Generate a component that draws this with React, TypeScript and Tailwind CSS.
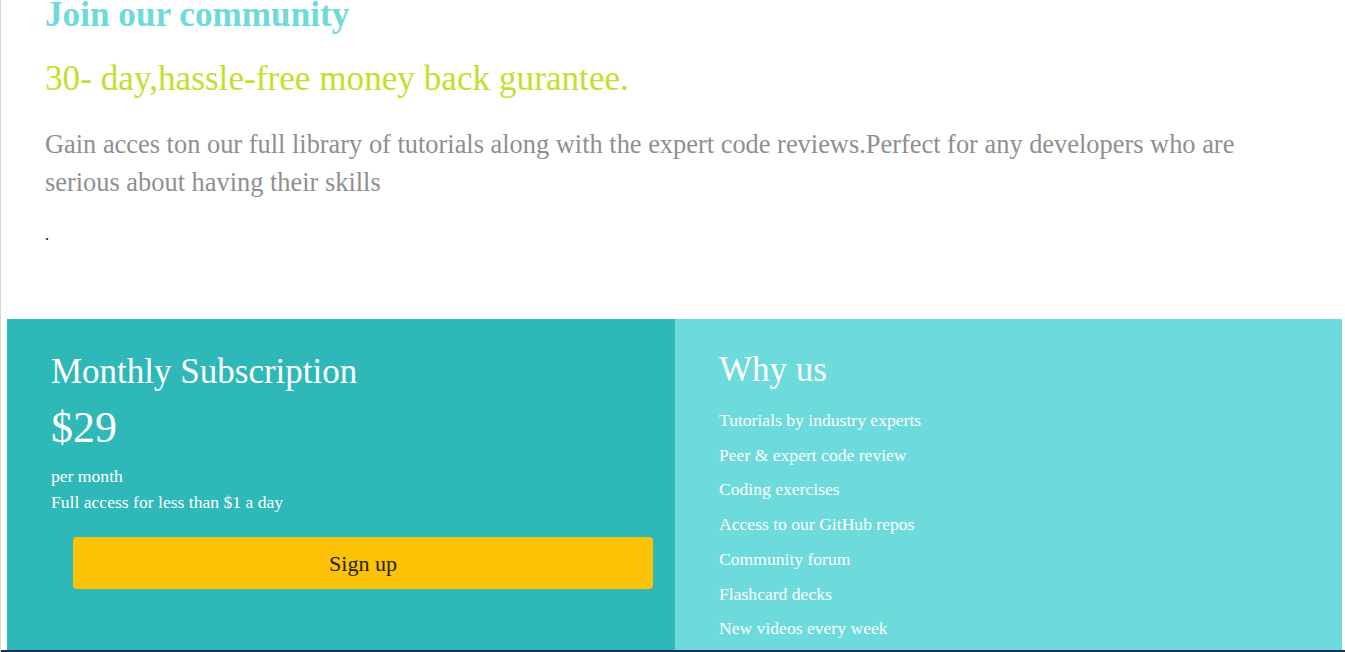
import React from "react";

const serif = { fontFamily: '"Liberation Serif", "Times New Roman", serif' };

export default function App() {
  const items = [
    "Tutorials by industry experts",
    "Peer & expert code review",
    "Coding exercises",
    "Access to our GitHub repos",
    "Community forum",
    "Flashcard decks",
    "New videos every week",
  ];
  return (
    <div
      className="w-[1345px] h-[652px] overflow-hidden bg-white flex flex-col border-l border-l-[#d6d6d6]"
      style={serif}
    >
      <div className="flex-1 flex flex-col pl-[44px] pr-[3px]">
        <h1 className="-mt-[5px] text-[35.2px] leading-[40px] font-bold text-[#6fdada]">
          Join our community
        </h1>
        <h2 className="mt-[24px] text-[35.2px] leading-[40px] text-[#c3df2e]">
          30- day,hassle-free money back gurantee.
        </h2>
        <p className="mt-[26px] text-[26.4px] leading-[38px] text-[#8f8f8f] pr-[60px]">
          Gain acces ton our full library of tutorials along with the expert code reviews.Perfect for any developers who are serious about having their skills
        </p>
        <p className="mt-[22px] text-[16px] leading-[24px] text-black">.</p>
      </div>
      <div className="flex h-[331px] ml-[6px] mr-[3px] shrink-0">
        <div className="w-[668px] bg-[#2fb8b8] pl-[44px] pt-[33px] text-white">
          <h3 className="text-[35px] leading-[40px]">Monthly Subscription</h3>
          <div className="mt-[11px] text-[44px] leading-[50px]">$29</div>
          <div className="mt-[10px] text-[17.6px] leading-[26px]">per month</div>
          <div className="text-[17.6px] leading-[26px]">Full access for less than $1 a day</div>
          <button className="mt-[22px] ml-[22px] w-[580px] h-[52px] rounded-[4px] bg-[#fdc106] text-[#222] text-[22px]">
            Sign up
          </button>
        </div>
        <div className="flex-1 bg-[#6ddbdb] pl-[44px] pt-[31px] text-white">
          <h3 className="text-[35px] leading-[40px]">Why us</h3>
          <ul className="mt-[13px]">
            {items.map((t) => (
              <li key={t} className="text-[17.6px] leading-[34.7px]">
                {t}
              </li>
            ))}
          </ul>
        </div>
      </div>
      <div className="h-[2px] bg-[#1e2c5c] shrink-0" />
    </div>
  );
}
